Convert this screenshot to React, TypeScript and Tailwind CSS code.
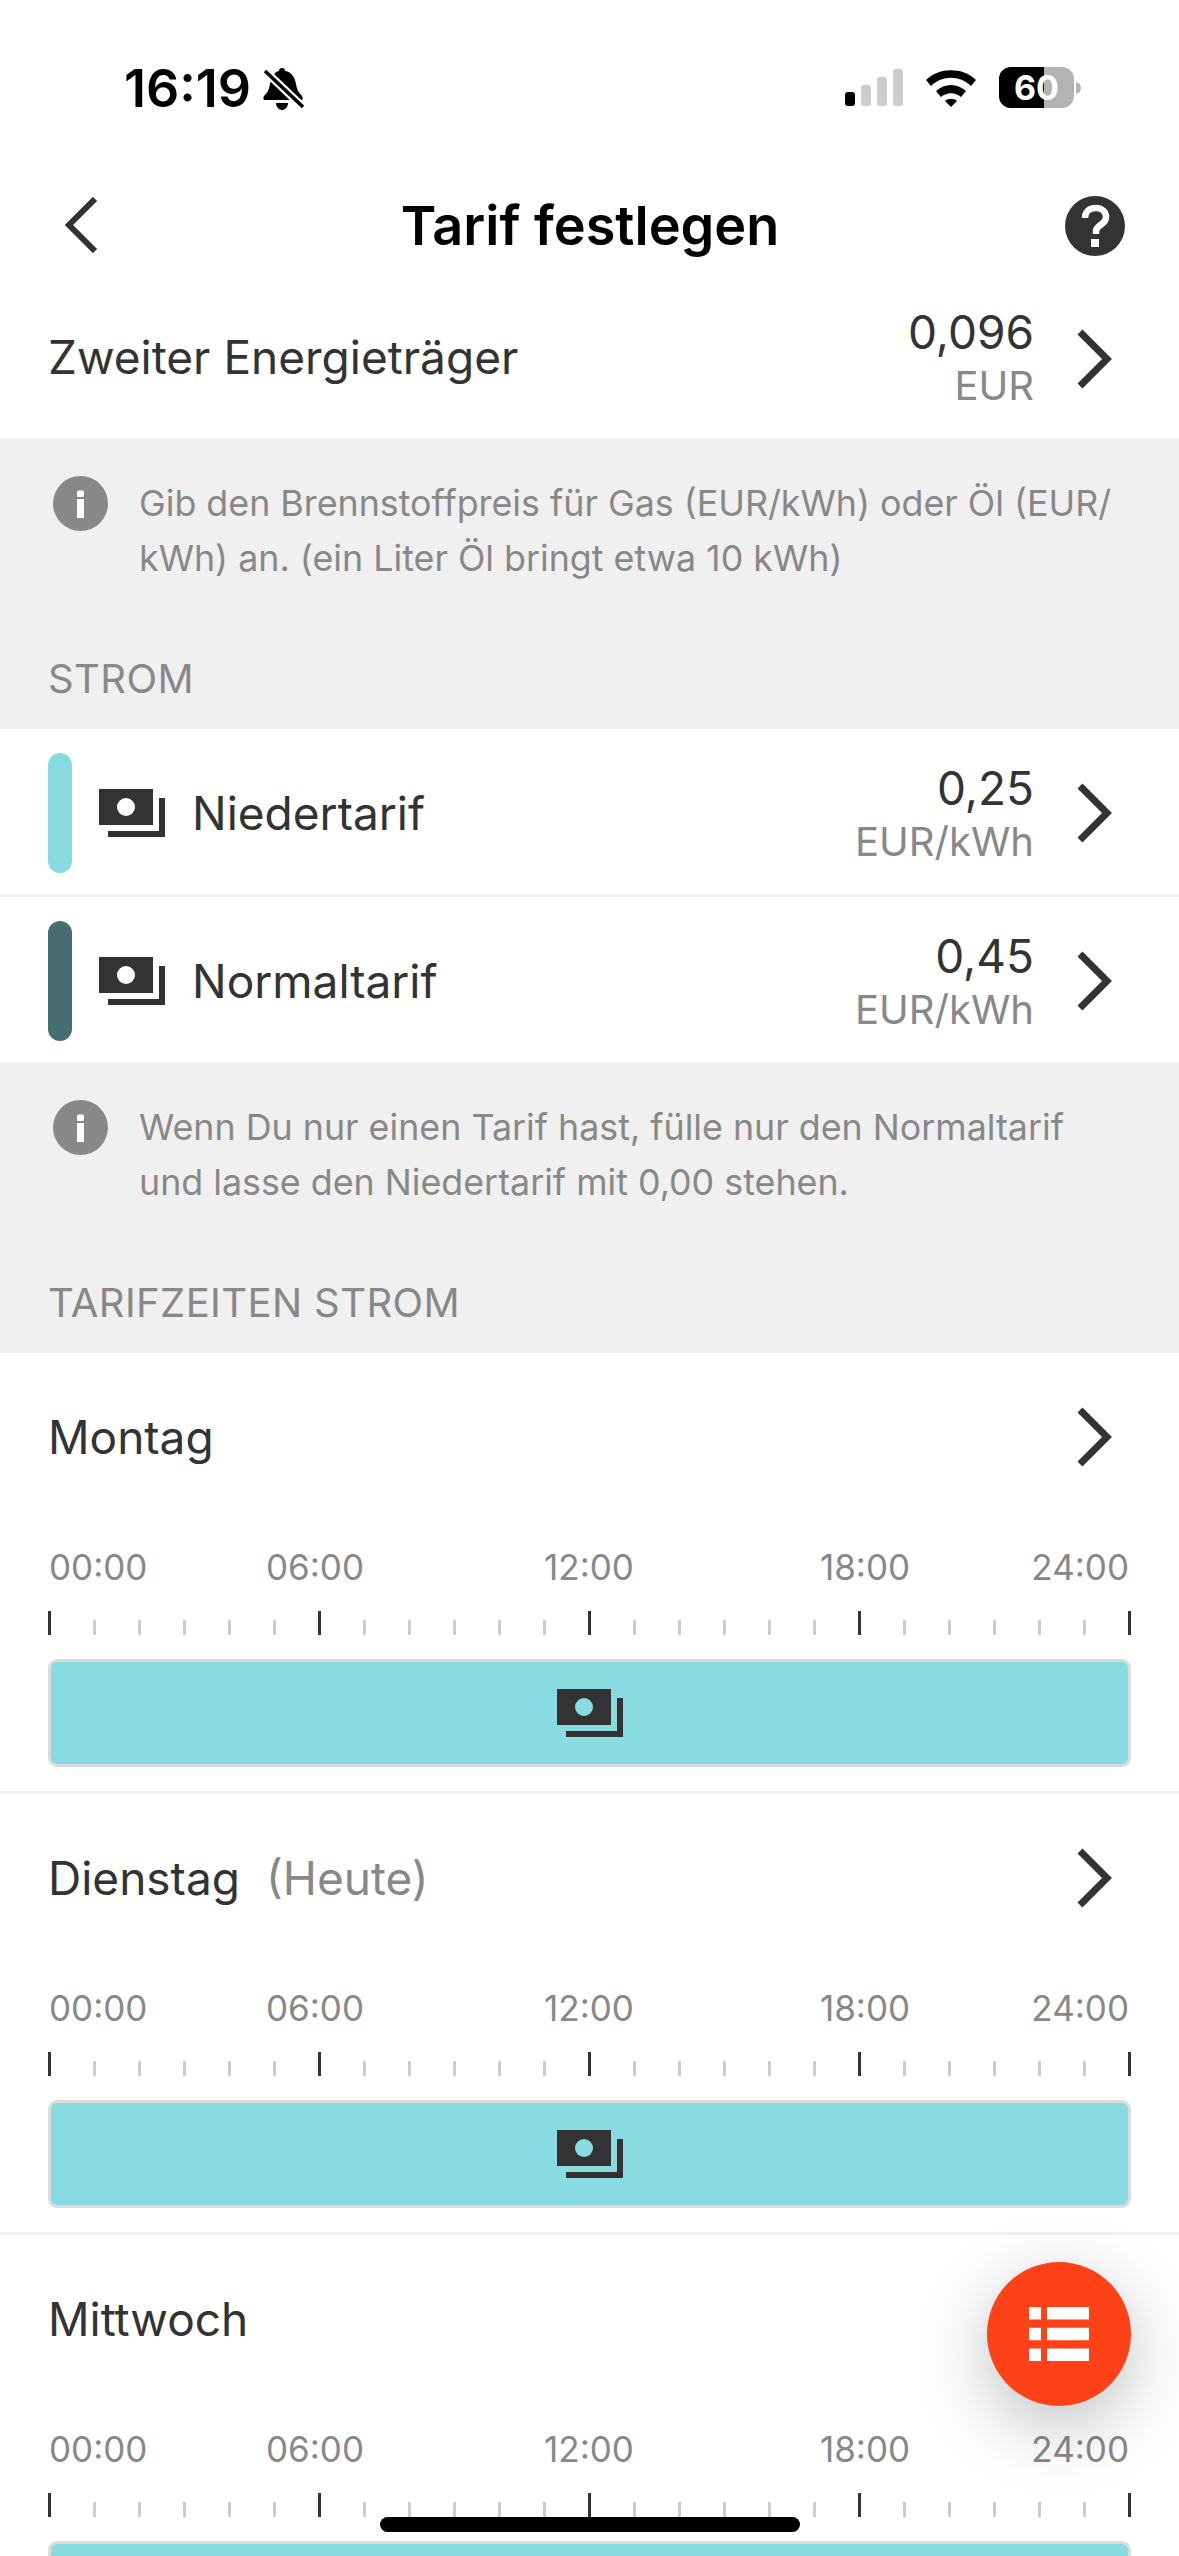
import type { ReactNode } from 'react';

const FONT = "font-['Inter','Noto_Sans',sans-serif]";

function MoneyIcon({ hole = 'white' }: { hole?: string }) {
  return (
    <svg width="66" height="48" viewBox="0 0 66 48" className="shrink-0">
      <path d="M0 0h54v36H0z" fill="#333333" />
      <circle cx="27" cy="18" r="9" fill={hole} />
      <path d="M60 9h6v39H9v-6h51z" fill="#333333" />
    </svg>
  );
}

function Chevron() {
  return (
    <svg width="36" height="60" viewBox="0 0 36 60" className="shrink-0">
      <path d="M3 3l27 27L3 57" fill="none" stroke="#333333" strokeWidth="7" />
    </svg>
  );
}

function InfoIcon() {
  return (
    <svg width="55" height="55" viewBox="0 0 55 55" className="shrink-0">
      <circle cx="27.500" cy="27.500" r="27.500" fill="#888888" />
      <rect x="24" y="14.500" width="7" height="6.500" rx="1.500" fill="#ffffff" />
      <rect x="24" y="23" width="7" height="19" fill="#ffffff" />
    </svg>
  );
}

function Info({ children }: { children: ReactNode }) {
  return (
    <div className="flex items-start gap-[31px] pl-[53px] pr-[48px] pt-[38px]">
      <InfoIcon />
      <p className="text-[35.8px] leading-[55px] text-[#888888]">{children}</p>
    </div>
  );
}

function SectionLabel({ children }: { children: ReactNode }) {
  return <div className="pl-[48px] pt-[71px] text-[40px] leading-[44px] tracking-[0.4px] text-[#888888]">{children}</div>;
}

function TariffRow({ color, name, price }: { color: string; name: string; price: string }) {
  return (
    <div className="flex h-[165px] items-center bg-white pl-[48px] pr-[66px] pt-[3px]">
      <div className={`h-[120px] w-[24px] rounded-[12px] ${color}`} />
      <div className="ml-[27px]">
        <MoneyIcon />
      </div>
      <div className="ml-[27px] flex-1 text-[46px] text-[#333333]">{name}</div>
      <div className="mr-[43px] pt-[3px] text-right">
        <div className="text-[46px] leading-[54px] text-[#333333]">{price}</div>
        <div className="text-[40px] leading-[54px] text-[#888888]">EUR/kWh</div>
      </div>
      <Chevron />
    </div>
  );
}

const hours = [
  { label: '00:00', cls: 'text-left' },
  { label: '06:00', cls: 'ml-[119px] text-center' },
  { label: '12:00', cls: 'ml-[176px] text-center' },
  { label: '18:00', cls: 'ml-[178px] text-center' },
  { label: '24:00', cls: 'ml-[117px] text-right' },
];

function Ruler() {
  // 25 ticks, every sixth one is a long dark one
  return (
    <div className="flex h-[24px] w-[1083px] items-end justify-between">
      {Array.from({ length: 25 }).map((_, i) =>
        i % 6 === 0 ? (
          <div key={i} className="h-[24px] w-[3px] bg-[#333333]" />
        ) : (
          <div key={i} className="h-[15px] w-[3px] bg-[#cccccc]" />
        )
      )}
    </div>
  );
}

function Day({ name, note }: { name: string; note?: string }) {
  return (
    <div className="bg-white">
      <div className="flex h-[168px] items-center pl-[48px] pr-[66px]">
        <div className="flex-1 text-[46px] text-[#333333]">
          {name}
          {note && <span className="ml-[26px] text-[#888888]">{note}</span>}
        </div>
        <Chevron />
      </div>
      <div className="flex pl-[49px] pt-[26px] text-[35px] leading-[40px] text-[#888888]">
        {hours.map((h) => (
          <div key={h.label} className={`w-[98px] ${h.cls}`}>
            {h.label}
          </div>
        ))}
      </div>
      <div className="pl-[48px] pt-[24px]">
        <Ruler />
      </div>
      <div className="px-[48px] pt-[24px] pb-[24px]">
        <div className="flex h-[108px] w-[1083px] items-center justify-center rounded-[9px] border-[3px] border-[#dcdcdc] bg-[#88dbe0]">
          <MoneyIcon hole="#88dbe0" />
        </div>
      </div>
      <div className="h-[3px] bg-[#f0f0f0]" />
    </div>
  );
}

export default function App() {
  return (
    <div className={`relative h-[2556px] w-[1179px] overflow-hidden bg-white ${FONT}`}>
      {/* Status bar */}
      <div className="flex h-[170px] items-start justify-between pt-[60px] pl-[124px] pr-[98px]">
        <div className="flex items-center gap-[12px] pt-[1px]">
          <span className="text-[52px] leading-[56px] font-semibold text-black">16:19</span>
          <svg width="41" height="43" viewBox="0 0 41 43">
            <path d="M19 0c2 0 3 1 3 3 7 1 10 7 11 13 1 6 3 9 6 12 1 2 1 4-1 4H2c-2 0-2-2-1-4 3-3 5-6 6-12 1-6 4-12 9-13 0-2 1-3 3-3z" fill="#000" />
            <path d="M13 35h12c0 4-3 7-6 7s-6-3-6-7z" fill="#000" />
            <path d="M2 3l38 36" stroke="#fff" strokeWidth="8" />
            <path d="M2 3l38 36" stroke="#000" strokeWidth="3.500" />
          </svg>
        </div>
        <div className="flex items-center gap-[22px] pt-[7px]">
          <div className="flex items-end gap-[6px]">
            <div className="h-[14px] w-[10px] rounded-[3px] bg-black" />
            <div className="h-[21px] w-[10px] rounded-[3px] bg-[#cccccc]" />
            <div className="h-[29px] w-[10px] rounded-[3px] bg-[#cccccc]" />
            <div className="h-[37px] w-[10px] rounded-[3px] bg-[#cccccc]" />
          </div>
          <svg width="52" height="38" viewBox="0 0 52 38">
            <path d="M1 11C14-2 38-2 51 11l-5 6C35 6 17 6 6 17z" fill="#000" />
            <path d="M11 22c9-8 21-8 30 0l-5 6c-6-5-14-5-20 0z" fill="#000" />
            <path d="M20 32c3-3 9-3 12 0l-6 6z" fill="#000" />
          </svg>
          <div className="flex items-center gap-[2px]">
            <div className="relative h-[41px] w-[75px] overflow-hidden rounded-[12px] bg-[#b3b3b3]">
              <div className="absolute inset-y-0 left-0 w-[45px] bg-black" />
              <div className="absolute inset-0 flex items-center justify-center text-[34px] font-bold text-white">60</div>
            </div>
            <svg width="5" height="12" viewBox="0 0 5 12">
              <path d="M0 0c3 1 5 3 5 6s-2 5-5 6z" fill="#b3b3b3" />
            </svg>
          </div>
        </div>
      </div>

      {/* Nav */}
      <div className="flex h-[110px] items-center pl-[65px] pr-[54px]">
        <div className="w-[50px]">
          <svg width="36" height="56" viewBox="0 0 36 56">
            <path d="M30 2L4 28l26 26" fill="none" stroke="#333333" strokeWidth="6" />
          </svg>
        </div>
        <div className="flex-1 text-center text-[54px] font-semibold text-black">Tarif festlegen</div>
        <svg width="60" height="60" viewBox="0 0 60 60" className="translate-y-[1px]">
          <circle cx="30" cy="30" r="30" fill="#333333" />
          <path d="M20 22c0-6 4-10 10.500-10S41 16 41 21c0 4-2.500 6-5.500 8-3 2-4.500 3.500-4.500 6.500V38" fill="none" stroke="#ffffff" strokeWidth="6.500" />
          <rect x="26" y="43" width="8" height="8" fill="#ffffff" />
        </svg>
      </div>

      {/* Zweiter Energieträger */}
      <div className="flex h-[158px] items-center pl-[48px] pr-[66px]">
        <div className="flex-1 pb-[3px] text-[46px] text-[#333333]">Zweiter Energieträger</div>
        <div className="mr-[43px] text-right">
          <div className="text-[46px] leading-[54px] text-[#333333]">0,096</div>
          <div className="text-[40px] leading-[54px] text-[#888888]">EUR</div>
        </div>
        <Chevron />
      </div>

      <div className="h-[291px] bg-[#f0f0f0]">
        <Info>
          Gib den Brennstoffpreis für Gas (EUR/kWh) oder Öl (EUR/ kWh) an. (ein Liter Öl bringt etwa 10 kWh)
        </Info>
        <SectionLabel>STROM</SectionLabel>
      </div>

      <TariffRow color="bg-[#88dbe0]" name="Niedertarif" price="0,25" />
      <div className="h-[3px] bg-[#f0f0f0]" />
      <TariffRow color="bg-[#466d71]" name="Normaltarif" price="0,45" />

      <div className="h-[291px] bg-[#f0f0f0]">
        <Info>
          Wenn Du nur einen Tarif hast, fülle nur den Normaltarif und lasse den Niedertarif mit 0,00 stehen.
        </Info>
        <SectionLabel>TARIFZEITEN STROM</SectionLabel>
      </div>

      <Day name="Montag" />
      <Day name="Dienstag" note="(Heute)" />
      <Day name="Mittwoch" />

      {/* Floating list button */}
      <div className="absolute left-[987px] top-[2262px] flex h-[144px] w-[144px] items-center justify-center rounded-full bg-[#ff4117] shadow-[0_20px_70px_rgba(0,0,0,0.25)]">
        <svg width="60" height="54" viewBox="0 0 60 54">
          <path d="M0 0h12v12.500H0zM18 0h42v12.500H18zM0 20.750h12v12.500H0zM18 20.750h42v12.500H18zM0 41.500h12V54H0zM18 41.500h42V54H18z" fill="#ffffff" />
        </svg>
      </div>

      {/* Home indicator */}
      <div className="absolute bottom-[24px] left-[380px] h-[15px] w-[420px] rounded-full bg-black" />
    </div>
  );
}
